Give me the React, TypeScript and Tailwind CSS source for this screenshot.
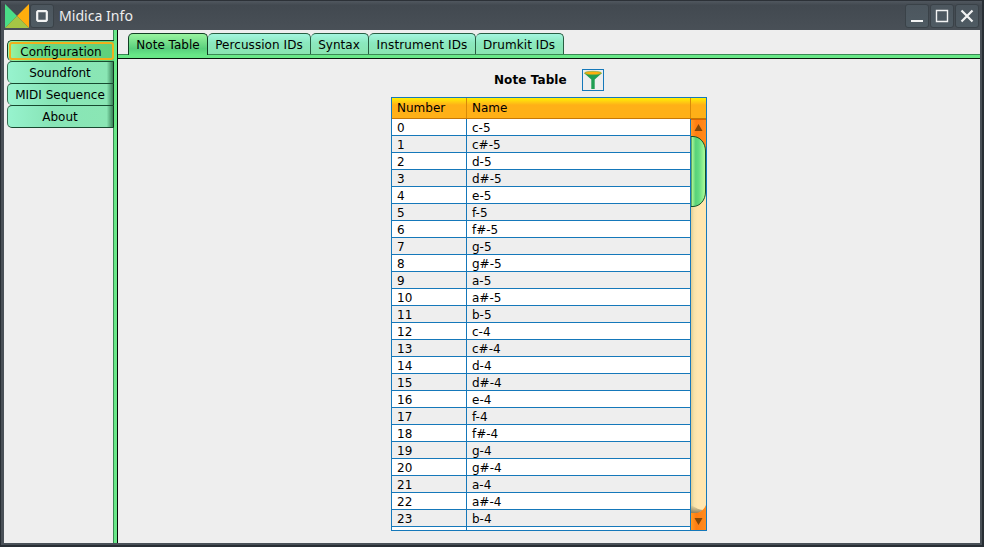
import React from 'react';

const pitches = ['c', 'c#', 'd', 'd#', 'e', 'f', 'f#', 'g', 'g#', 'a', 'a#', 'b'];
const notes = Array.from({ length: 24 }, (_, i) => `${pitches[i % 12]}-${5 - Math.floor(i / 12)}`);

const sections = [
  { label: 'Configuration', size: 'h-[21px]', active: true },
  { label: 'Soundfont', size: 'h-[22px]', active: false },
  { label: 'MIDI Sequence', size: 'h-[22px]', active: false },
  { label: 'About', size: 'h-[23px]', active: false },
];

const tabs = [
  { label: 'Note Table', size: 'w-[80px]', active: true },
  { label: 'Percussion IDs', size: 'w-[103px] tracking-[0.07px]', active: false },
  { label: 'Syntax', size: 'w-[58px] pr-[1px]', active: false },
  { label: 'Instrument IDs', size: 'w-[107px] tracking-[0.14px]', active: false },
  { label: 'Drumkit IDs', size: 'w-[88px] pr-[1px] tracking-[0.07px]', active: false },
];

function TitleButton({ children }: { children: React.ReactNode }) {
  return (
    <div className="flex h-[24px] w-[24px] items-center justify-center rounded-[3px] border border-[#3a4248] bg-linear-to-b from-[#4c565e] to-[#4f5b63]">
      {children}
    </div>
  );
}

function TitleBar() {
  return (
    <header className="flex h-[30px] shrink-0 items-start border-t border-[#2c3137] bg-linear-to-b from-[#50575f] via-[#424950] via-15% to-[#495057] pr-[3px] pl-[4px]">
      <svg className="mt-[3px] shrink-0" width="24" height="24" viewBox="0 0 24 24">
        <path d="M0 0L12 12L0 24Z" fill="#4ade87" />
        <path d="M24 0V24L12 12Z" fill="#ffae0d" />
        <path d="M0 24L12 12L24 24Z" fill="#a5c645" />
      </svg>
      <div className="mt-[3px] ml-[1px]">
        <TitleButton>
          <svg width="12" height="12" viewBox="0 0 12 12">
            <path d="M2 1.2H10L10.8 2V10L10 10.8H2L1.2 10V2Z" fill="none" stroke="#f2f3f3" strokeWidth="2.2" />
          </svg>
        </TitleButton>
      </div>
      <span className="mt-[5px] ml-[5px] font-['Noto_Sans','Open_Sans',sans-serif] text-[14.1px] leading-[20px] text-[#eeeeee]">Midica Info</span>
      <div className="mt-[3px] ml-auto flex gap-[1px]">
        <TitleButton>
          <svg width="14" height="14" viewBox="0 0 14 14"><path d="M1 12H13" stroke="#f2f3f3" strokeWidth="2" /></svg>
        </TitleButton>
        <TitleButton>
          <svg width="14" height="14" viewBox="0 0 14 14"><path d="M1.5 1.5H12.5V12.5H1.5Z" fill="none" stroke="#f2f3f3" strokeWidth="1.4" /></svg>
        </TitleButton>
        <TitleButton>
          <svg width="14" height="14" viewBox="0 0 14 14"><path d="M1.5 1.5L12.5 12.5M12.5 1.5L1.5 12.5" stroke="#f2f3f3" strokeWidth="2.2" /></svg>
        </TitleButton>
      </div>
    </header>
  );
}

function SideTabs() {
  return (
    <nav className="relative z-10 -mr-[1px] w-[110px] shrink-0 pt-[10px] pl-[3px]">
      {sections.map((s) =>
        s.active ? (
          <div key={s.label} className={`${s.size} rounded-l-[5px] border-t border-l border-[#123f24] bg-linear-to-r from-[#9cf5a5] via-[#68d987] via-25% to-[#5fd07c] pt-[1px] pl-[1px]`}>
            <div className="flex h-[18px] items-center justify-center rounded-[3px] border-2 border-[#f0b01c] pt-[1px] pr-[1px] leading-none">{s.label}</div>
          </div>
        ) : (
          <div key={s.label} className={`${s.size} flex items-center justify-center rounded-l-[5px] border-t border-r border-l border-[#35694f] border-t-[#174a30] border-r-[#123020] bg-[linear-gradient(to_right,#97f3ce,#88e5b7_40%,#8ae6b4_94%,#378256)] pt-[1px] pr-[1px] leading-none last:border-b last:border-b-[#174a30]`}>
            {s.label}
          </div>
        ),
      )}
    </nav>
  );
}

function TopTabs() {
  return (
    <div className="flex h-[24px] pt-[3px] pl-[10px]">
      {tabs.map((t) => (
        <div
          key={t.label}
          className={`${t.size} flex shrink-0 items-center justify-center rounded-t-[5px] border-t border-r leading-none ${
            t.active
              ? 'h-[22px] border-l border-[#123f24] bg-linear-to-b from-[#98f4a0] via-[#58cf7c] via-70% to-[#68e887] pt-px'
              : 'h-[21px] border-[#285e43] bg-linear-to-b from-[#a4f6df] via-[#8be8be] via-45% to-[#89e4b0] pt-[2px]'
          }`}
        >
          {t.label}
        </div>
      ))}
    </div>
  );
}

function ScrollBar() {
  return (
    <svg className="block shrink-0" width="15" height="411" viewBox="0 0 15 411">
      <defs>
        <linearGradient id="track"><stop offset="0" stopColor="#dccb94" /><stop offset=".2" stopColor="#f6e2aa" /><stop offset=".45" stopColor="#ffe6af" /><stop offset="1" stopColor="#ffe6af" /></linearGradient>
        <linearGradient id="thumb"><stop offset="0" stopColor="#c4ff9e" /><stop offset=".32" stopColor="#58d179" /><stop offset=".55" stopColor="#65dc81" /><stop offset="1" stopColor="#b2ff9b" /></linearGradient>
        <linearGradient id="arrow"><stop offset="0" stopColor="#ff9b25" /><stop offset=".35" stopColor="#ff7d11" /><stop offset="1" stopColor="#ff8c1e" /></linearGradient>
        <linearGradient id="shade" x1="0" y1="0" x2="0" y2="1"><stop offset="0" stopColor="#756a4b" stopOpacity="0" /><stop offset="1" stopColor="#756a4b" stopOpacity=".9" /></linearGradient>
      </defs>
      <rect width="15" height="411" fill="url(#track)" />
      <rect width="15" height="32" fill="url(#arrow)" />
      <path d="M0 .5H15" stroke="#dc6500" />
      <path d="M3.5 12L7.5 5L11.5 12Z" fill="#854807" />
      <path d="M0 17.5H2C9 17.5 14.5 24 14.5 32V73C14.5 81 9 87.5 2 87.5H0Z" fill="url(#thumb)" stroke="#14502b" />
      <path d="M0 386C5 389 9 391 12 391C9 393 7 395 4 395H0Z" fill="url(#shade)" />
      <path d="M0 394H4C9 394 13 391 15 386V411H0Z" fill="url(#arrow)" />
      <path d="M3.5 399L7.5 406L11.5 399Z" fill="#854807" />
    </svg>
  );
}

function NoteTable() {
  return (
    <div className="mt-[6px] w-[316px] border border-[#1578ba]">
      <div className="flex h-[21px] border-b border-[#c67707] bg-linear-to-b from-[#fff000] via-[#ffb017] via-35% to-[#ffb017] leading-[20px]">
        <div className="w-[75px] border-r border-[#d78a08] pl-[5px]">Number</div>
        <div className="w-[224px] border-r border-[#d78a08] pl-[5px]">Name</div>
      </div>
      <div className="flex h-[411px] overflow-hidden">
        <div className="w-[299px] border-r border-[#1578ba]">
          {notes.map((note, i) => (
            <div key={note} className="flex h-[17px] border-b border-[#1578ba] bg-white leading-[18px] even:bg-[#eeeeee]">
              <div className="w-[75px] border-r border-[#1578ba] pl-[5px]">{i}</div>
              <div className="pl-[5px]">{note}</div>
            </div>
          ))}
          <div className="h-[3px] bg-white"><div className="h-full w-[75px] border-r border-[#1578ba]" /></div>
        </div>
        <ScrollBar />
      </div>
    </div>
  );
}

export default function App() {
  return (
    <div className="flex h-[547px] w-[984px] flex-col overflow-hidden border-r-2 border-b-2 border-l border-[#282e34] bg-[#495057] font-['DejaVu_Sans',sans-serif] text-[12px] text-black">
      <TitleBar />
      <div className="flex h-[515px] border-r-2 border-b-2 border-l-3 border-[#495057] bg-[#eeeeee]">
        <SideTabs />
        <div className="w-[5px] shrink-0 border-r border-l border-r-[#050c07] border-l-[#398954] bg-[#68e887]" />
        <main className="min-w-0 flex-1">
          <TopTabs />
          <div className="h-[5px] border-t border-b border-t-[#398954] border-b-[#07170b] bg-[#68e887]" />
          <section className="flex flex-col items-center pt-[10px]">
            <div className="flex h-[22px] items-center">
              <h1 className="w-[73px] font-bold tracking-[0.08px] whitespace-nowrap">Note Table</h1>
              <button className="ml-[15px] flex h-[22px] w-[22px] items-center justify-center border border-[#1578ba] bg-[#eeeeee]">
                <svg width="20" height="20" viewBox="0 0 20 20">
                  <path d="M1 3L8.3 9.5V19H11.7V9.5L19 3Z" fill="#209e52" />
                  <ellipse cx="10" cy="3" rx="8.5" ry="1.7" fill="#ffae0d" stroke="#6fa83c" strokeWidth=".6" />
                </svg>
              </button>
            </div>
            <NoteTable />
          </section>
        </main>
      </div>
    </div>
  );
}
